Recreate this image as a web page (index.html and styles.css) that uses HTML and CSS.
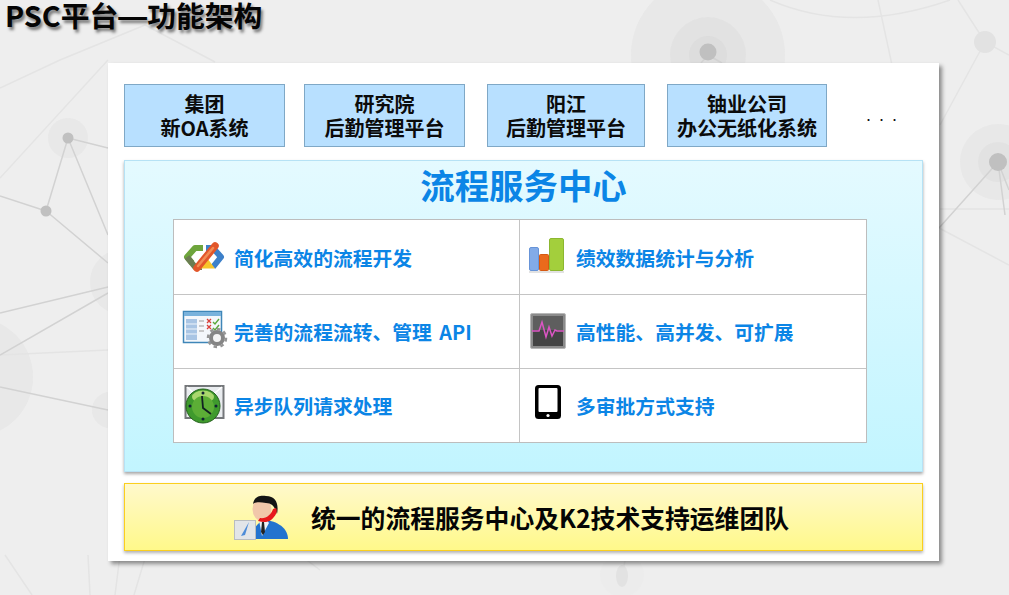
FILE: index.html
```html
<!DOCTYPE html>
<html lang="zh">
<head>
<meta charset="utf-8">
<title>PSC平台—功能架构</title>
<link rel="stylesheet" href="styles.css">
</head>
<body>
<svg class="backdrop" viewBox="0 0 1009 595" aria-hidden="true">
  <g class="halo">
    <circle cx="708" cy="55" r="77"/><circle cx="708" cy="55" r="38"/><circle cx="708" cy="55" r="19"/>
    <circle cx="68" cy="138" r="20"/>
    <circle cx="-27" cy="377" r="60"/>
    <circle cx="123" cy="282" r="33"/>
    <circle cx="110" cy="410" r="18"/>
    <circle cx="998" cy="162" r="38"/><circle cx="998" cy="162" r="20"/>
  </g>
  <circle class="halo-pale" cx="622" cy="575" r="22"/>
  <g class="faint">
    <path d="M0 88 L60 60 L145 25 M0 178 L108 60 M145 25 L215 62 M770 0 Q850 35 950 0 M878 0 L892 65 M0 355 L108 350"/>
    <path d="M958 0 L985 42 L1009 55 M985 42 L940 125 M940 209 H1009 M939 228 L1009 265"/>
    <path d="M5 555 L32 595 M88 555 L90 595 M120 555 L115 595 M146 555 L134 595 M300 555 L320 570 M625 561 L622 575"/>
  </g>
  <g class="lines">
    <path d="M68 138 L108 148 M68 138 L46 211 M68 138 L108 235 M46 211 L108 263 M46 211 L0 196 M108 287 L0 313 M108 293 L0 355 M0 387 L108 410"/>
    <path d="M998 162 L939 228 M998 162 L1005 215 M998 162 L1009 190"/>
    <path d="M708 55 L701 63 M708 55 L722 63"/>
  </g>
  <g class="node">
    <circle cx="68" cy="138" r="5.5"/><circle cx="46" cy="211" r="5.5"/>
    <circle cx="708" cy="52" r="8.5"/><circle cx="998" cy="162" r="9"/>
  </g>
  <circle class="node-pale" cx="985" cy="42" r="11"/>
  <ellipse class="node-pale" cx="622" cy="576" rx="6" ry="11"/>
</svg>

<h1 class="title">PSC平台<span class="dash">—</span>功能架构</h1>

<main class="card">
  <div class="systems">
    <div class="system s1">集团<br>新OA系统</div>
    <div class="system s2">研究院<br>后勤管理平台</div>
    <div class="system s3">阳江<br>后勤管理平台</div>
    <div class="system s4">铀业公司<br>办公无纸化系统</div>
    <div class="more">. . .</div>
  </div>

  <section class="center">
    <h2 class="center-title">流程服务中心</h2>
    <div class="grid">
      <div class="cell">
        <svg class="icon" viewBox="0 0 44 38">
          <path d="M21 10 H13 L5 19 L10 25" fill="none" stroke="#6ea53c" stroke-width="6" stroke-linejoin="round"/>
          <path d="M5 19 L13 29 H20" fill="none" stroke="#6b7d52" stroke-width="6" stroke-linejoin="round"/>
          <path d="M24 10 H31 L39 19 L31 29" fill="none" stroke="#3d80c9" stroke-width="6" stroke-linejoin="round"/>
          <path d="M16 29 H30 L24 21 Z" fill="#f7c52b" stroke="#f7c52b" stroke-width="3"/>
          <path d="M15 30 L33 8" stroke="#e2562a" stroke-width="7.500" stroke-linecap="round"/>
          <path d="M16 28 L31 10" stroke="#f28d55" stroke-width="2.500" stroke-linecap="round"/>
        </svg>
        <span>简化高效的流程开发</span>
      </div>
      <div class="cell">
        <svg class="icon" viewBox="0 0 44 38">
          <rect x="5.500" y="9.500" width="9" height="23" rx="1.500" fill="#82abe8" stroke="#6794d8"/>
          <rect x="15.500" y="16.500" width="9" height="16" rx="1" fill="#ea6a1c" stroke="#d65a12"/>
          <rect x="25.500" y="0.500" width="14" height="32" rx="1.500" fill="#a3cf3c" stroke="#8cb730"/>
          <rect x="5" y="33" width="35" height="2" fill="#e2e2e2"/>
        </svg>
        <span>绩效数据统计与分析</span>
      </div>
      <div class="cell">
        <svg class="icon" viewBox="0 0 44 38">
          <rect x="1.500" y="-1.500" width="38" height="31" fill="#f4f7fb" stroke="#3f86b8" stroke-width="1.500"/>
          <rect x="2" y="-1" width="37" height="4" fill="#79b2dc"/>
          <rect x="4" y="6" width="11" height="21" fill="#a9c5e4"/>
          <path d="M4 11H15M4 16H15M4 21H15" stroke="#eef4fa"/>
          <path d="M17 8H22M17 13H22M17 18H22" stroke="#bbb" stroke-width="1.500"/>
          <path d="M25 6l4 4m0-4l-4 4M25 12l4 4m0-4l-4 4" stroke="#d9403a" stroke-width="1.300"/>
          <path d="M31 9l2 2 4-5M31 15l2 2 4-5" stroke="#59a83a" stroke-width="1.400" fill="none"/>
          <circle cx="35" cy="25" r="6" fill="#f4f4f4" stroke="#858585" stroke-width="4"/>
          <circle cx="35" cy="25" r="9" fill="none" stroke="#959595" stroke-width="2.500" stroke-dasharray="3.500 3.500"/>
        </svg>
        <span class="api">完善的流程流转、管理 API</span>
      </div>
      <div class="cell">
        <svg class="icon" viewBox="0 0 44 38">
          <rect x="6.500" y="0.500" width="35" height="35" rx="1.500" fill="#8b8b8b" stroke="#b8b8b8"/>
          <rect x="9" y="3" width="30" height="30" fill="#444"/>
          <rect x="9" y="3" width="30" height="14" fill="#5e5e5e"/>
          <path d="M8 18H15L18 9L22 24L25 14L28 23L31 17L33 18H40" fill="none" stroke="#dc55c4" stroke-width="1.500"/>
        </svg>
        <span>高性能、高并发、可扩展</span>
      </div>
      <div class="cell">
        <svg class="icon" viewBox="0 0 44 38">
          <rect x="3.500" y="-1" width="38" height="32" fill="#e9ecef" stroke="#74777a" stroke-width="2"/>
          <path d="M5 0 L22 15 L40 0" fill="none" stroke="#fff" stroke-width="1.500"/>
          <circle cx="21" cy="19" r="17" fill="#3f9a2d" stroke="#24611c"/>
          <ellipse cx="21" cy="10" rx="11" ry="6.500" fill="#a9d76d"/>
          <circle cx="21" cy="20" r="11" fill="#5cae36"/>
          <path d="M20 9 L21 21 L29 27" fill="none" stroke="#122" stroke-width="1.800"/>
          <g fill="#123"><circle cx="21" cy="6" r="1.500"/><circle cx="21" cy="32" r="1.500"/><circle cx="8" cy="19" r="1.500"/><circle cx="34" cy="19" r="1.500"/></g>
        </svg>
        <span>异步队列请求处理</span>
      </div>
      <div class="cell">
        <svg class="icon" viewBox="0 0 44 38">
          <rect x="11" y="-2" width="26" height="34" rx="3.500" fill="#000"/>
          <rect x="14.500" y="1" width="19" height="24" rx="1" fill="#fff"/>
          <circle cx="24" cy="28.500" r="1.600" fill="#fff"/>
        </svg>
        <span>多审批方式支持</span>
      </div>
    </div>
  </section>

  <section class="support">
    <svg class="person" viewBox="0 0 56 46">
      <path d="M19 45 C20 33 26 28 31 26 C40 26 55 32 55 45 Z" fill="#2273cf"/>
      <path d="M26 26 L33 25 L36 29 L29 42 Z" fill="#eef2f6"/>
      <path d="M29 28h2l1 10-2 3-2-3z" fill="#222"/>
      <ellipse cx="29" cy="15" rx="9.500" ry="12" fill="#f1c7aa"/>
      <path d="M20 10 C21 2 28 1 33 2 C43 2 46 10 44 20 C42 14 40 9 33 9 C27 8 22 8 20 10 Z" fill="#141414"/>
      <path d="M43 14 C45 17 43 22 38 26 C34 29 29 28 25 27 L27 24 C33 25 38 21 40 15 Z" fill="#e8181c"/>
      <rect x="1.500" y="26.500" width="21" height="19" fill="#e2e5e8" stroke="#b9bdc0"/>
      <path d="M8 42 L16 28 L12 41 Z" fill="#4d8cd8"/>
    </svg>
    <span>统一的流程服务中心及K2技术支持运维团队</span>
  </section>
</main>
</body>
</html>
```
FILE: styles.css
```css
* { box-sizing: border-box; }
html, body { margin: 0; padding: 0; }
body {
  position: relative;
  width: 1009px;
  height: 595px;
  overflow: hidden;
  background: #eeeeee;
  font-family: "Noto Sans CJK SC", "Liberation Sans", sans-serif;
}
.backdrop { position: absolute; left: 0; top: 0; width: 1009px; height: 595px; }
.halo circle { fill: #999; opacity: .07; }
.halo-pale { fill: #999; opacity: .025; }
.faint path { fill: none; stroke: #e4e4e4; stroke-width: 1.500; }
.lines path { fill: none; stroke: #d2d2d2; stroke-width: 1.500; }
.node circle { fill: #c0c0c0; }
.node-pale { fill: #e2e2e2; }

.title {
  position: relative;
  margin: 0;
  height: 63px;
  padding: 0 0 0 5px;
  font-size: 28.800px;
  line-height: 30px;
  font-weight: 700;
  color: #050505;
  text-shadow: 2px 3px 3px rgba(0, 0, 0, .5);
  white-space: nowrap;
}
.dash { font-family: "Liberation Sans", sans-serif; }

.card {
  position: relative;
  width: 831px;
  height: 498px;
  margin-left: 108px;
  padding: 21px 16px 0;
  background: #fff;
  box-shadow: 3px 3px 4px rgba(0, 0, 0, .42);
}

.systems { display: flex; height: 63px; }
.system {
  height: 63px;
  padding-top: 7px;
  background: #b8e0ff;
  border: 1px solid #7fa8c6;
  color: #0b0b0b;
  font-size: 20px;
  line-height: 24px;
  font-weight: 700;
  text-align: center;
}
.s1 { width: 161px; margin-right: 19px; }
.s2 { width: 161px; margin-right: 22px; }
.s3 { width: 158px; margin-right: 22px; }
.s4 { width: 160px; }
.more {
  margin-left: 39px;
  padding-top: 19px;
  font-size: 18px;
  line-height: 24px;
  word-spacing: 3px;
  color: #111;
  font-family: "Liberation Sans", sans-serif;
}

.center {
  height: 312px;
  margin-top: 13px;
  background: linear-gradient(#e4faff, #c2f5ff);
  border: 1px solid #b6e2f5;
  box-shadow: 0 2px 3px rgba(0, 0, 0, .35);
}
.center-title {
  margin: 0;
  height: 58px;
  font-size: 34.400px;
  line-height: 47px;
  font-weight: 700;
  color: #0b85e6;
  text-align: center;
}
.grid {
  display: grid;
  grid-template-columns: 346px 346px;
  grid-template-rows: 75px 74px 73px;
  width: 694px;
  height: 224px;
  margin-left: 48px;
  background: #fff;
  border: 1px solid #bdbdbd;
}
.cell {
  display: flex;
  align-items: center;
  border-bottom: 1px solid #c4c4c4;
  color: #0b85e6;
  font-size: 19.800px;
  font-weight: 700;
  white-space: nowrap;
}
.cell:nth-child(odd) { border-right: 1px solid #c4c4c4; padding-left: 8px; }
.cell:nth-child(even) { padding-left: 4px; }
.cell:nth-child(n+5) { border-bottom: 0; }
.icon { width: 44px; height: 38px; margin-right: 8px; flex: none; overflow: visible; }
.api { word-spacing: 3px; }

.support {
  display: flex;
  align-items: center;
  height: 68px;
  margin-top: 11px;
  padding-left: 108px;
  background: linear-gradient(#fff9cc, #fff98a);
  border: 1px solid #fbcf1e;
  box-shadow: 0 2px 3px rgba(0, 0, 0, .3);
  color: #050505;
  font-size: 24.800px;
  font-weight: 700;
  white-space: nowrap;
}
.person { width: 56px; height: 46px; margin-right: 22px; flex: none; }
```
